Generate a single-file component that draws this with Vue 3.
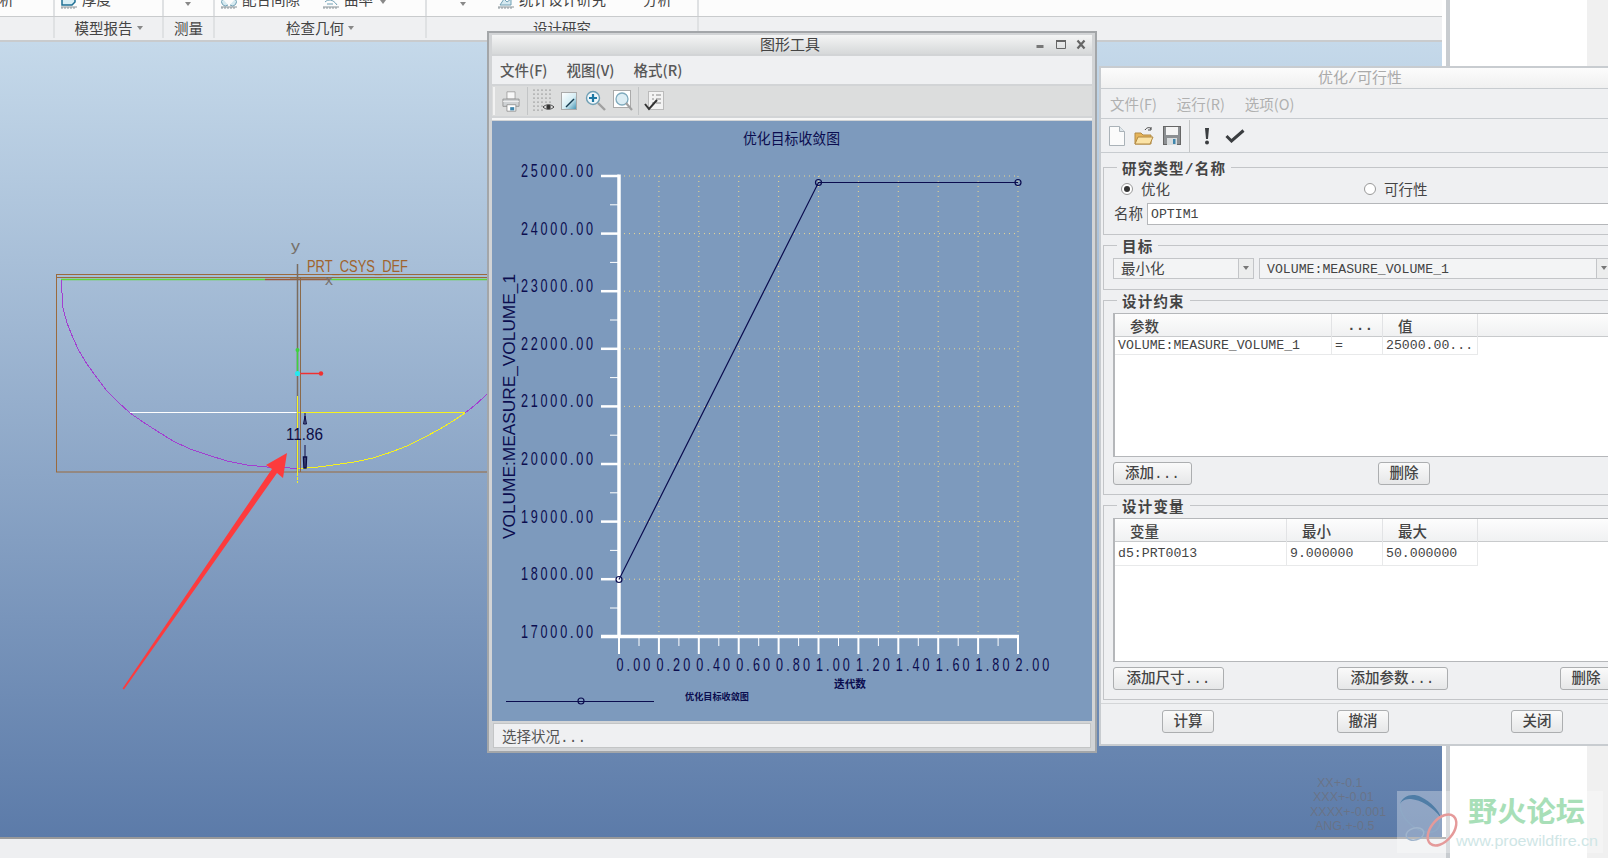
<template>
  <div class="desktop">
    <div class="workspace">
      <header class="ribbon">
        <div class="ribbon-row ribbon-top">
          <div class="cell"><span class="tool" style="margin-left:-15px">分析</span></div>
          <div class="cell">
            <svg class="rib-icon" style="margin-left:6px" width="16" height="10" viewBox="0 0 16 10"><path d="M1 0v6h10l3-3V0" fill="#d8eef5" stroke="#1d6f94" stroke-width="1.5"/><path d="M0 8h16M1 8v2M4 8v2M7 8v2M10 8v2M13 8v2" stroke="#8a9499" fill="none"/></svg>
            <span class="tool" style="margin-left:5px">厚度</span>
          </div>
          <div class="cell"><i class="caret" style="margin-left:21px"></i></div>
          <div class="cell">
            <svg class="rib-icon" style="margin-left:6px" width="16" height="10" viewBox="0 0 16 10"><path d="M2 0a3 3 0 0 0 5 6M14 0a3 3 0 0 1-5 6" fill="#d5e9f0" stroke="#6f9fb4"/><path d="M0 8h16M1 8v2M4 8v2M7 8v2M10 8v2M13 8v2" stroke="#8a9499" fill="none"/></svg>
            <span class="tool" style="margin-left:5px">配合间隙</span>
            <svg class="rib-icon" style="margin-left:23px" width="16" height="10" viewBox="0 0 16 10"><path d="M2 3c3-3 8-3 12 3M4 5h6" fill="none" stroke="#6f9fb4"/><path d="M0 8h16M1 8v2M4 8v2M7 8v2M10 8v2M13 8v2" stroke="#8a9499" fill="none"/></svg>
            <span class="tool" style="margin-left:5px">曲率</span>
            <i class="caret" style="margin-left:7px;margin-bottom:4px"></i>
          </div>
          <div class="cell">
            <i class="caret" style="margin-left:33px"></i>
            <svg class="rib-icon" style="margin-left:32px" width="16" height="10" viewBox="0 0 16 10"><path d="M2 6l4-6 3 3 4-3v6z" fill="#d5e9f0" stroke="#6f9fb4"/><path d="M0 8h16M1 8v2M4 8v2M7 8v2M10 8v2M13 8v2" stroke="#8a9499" fill="none"/></svg>
            <span class="tool" style="margin-left:5px">统计设计研究</span>
            <span class="tool" style="margin-left:37px">分析</span>
          </div>
          <div class="cell"></div>
        </div>
        <div class="ribbon-row ribbon-bottom">
          <div class="cell"></div>
          <div class="cell center"><span>模型报告</span><i class="caret"></i></div>
          <div class="cell center"><span>测量</span></div>
          <div class="cell center"><span>检查几何</span><i class="caret"></i></div>
          <div class="cell center"><span>设计研究</span></div>
          <div class="cell"></div>
        </div>
      </header>

      <div class="view-row">
        <div class="viewport">
          <svg class="cad" width="1442" height="795" viewBox="0 41 1442 795">
            <g fill="none" stroke="#9a6a3d" stroke-width="1">
              <rect x="56.5" y="273.5" width="600" height="197.5" />
              <path d="M57 276.5H660" />
            </g>
            <path d="M61 278.5H265M331 278.5H660" stroke="#5fd83a" stroke-width="1.5" fill="none" />
            <path d="M265 278.5H330" stroke="#9a5a3a" stroke-width="1.5" fill="none" />
            <polyline :points="purpleArc" fill="none" stroke="#a23fd0" stroke-width="1" shape-rendering="crispEdges" />
            <path d="M465 412C472 407 480 400 488 392" fill="none" stroke="#a23fd0" stroke-width="1" shape-rendering="crispEdges" />
            <path d="M130 411.5H297" stroke="#fff" stroke-width="1" />
            <path d="M297 411.5H465" stroke="#f6f21e" stroke-width="1" />
            <polyline :points="yellowArc" fill="none" stroke="#f6f21e" stroke-width="1" shape-rendering="crispEdges" />
            <g stroke="#8b6a4a" fill="none">
              <path d="M297.5 263V471" stroke="#7a6c60" stroke-width="1.5" />
              <path d="M300.5 276V471" />
              <path d="M290 278h40" />
            </g>
            <path d="M297.5 395V472" stroke="#f6f21e" stroke-width="1" />
            <path d="M297.5 472V482" stroke="#f6f21e" stroke-width="1" stroke-dasharray="3 1" />
            <path d="M297.5 349V372" stroke="#3ed43e" stroke-width="1.5" />
            <path d="M298 372.5H321" stroke="#f03030" stroke-width="1.5" />
            <circle cx="297.5" cy="349" r="2" fill="#3ed43e" />
            <circle cx="321" cy="372.5" r="2.2" fill="#f03030" />
            <circle cx="297.5" cy="372.5" r="2.6" fill="#26e8f0" />
            <text x="291" y="250" class="cad-axis" textLength="9" lengthAdjust="spacingAndGlyphs">y</text>
            <text x="325" y="284" class="cad-axis" textLength="8" lengthAdjust="spacingAndGlyphs">x</text>
            <text x="307" y="271" class="cad-name" textLength="101" lengthAdjust="spacingAndGlyphs">PRT_CSYS_DEF</text>
            <text x="286" y="439" class="cad-dim" textLength="37" lengthAdjust="spacingAndGlyphs">11.86</text>
            <g stroke="#0c0d45" fill="none">
              <path d="M305 412V423" />
              <path d="M303.5 423h3l-1.5-8z" />
              <path d="M305 444V467" />
              <path d="M303.5 456h3l-.5 11h-2z" stroke-width="1.5" />
            </g>
            <path d="M122.500 687.500L272 468L266 464L287 452L283 477L277 472L124 688.500Z" fill="#fd3b3d" />
            <g class="tolerance">
              <text x="1317" y="786">XX+-0.1</text>
              <text x="1313" y="800">XXX+-0.01</text>
              <text x="1310" y="815">XXXX+-0.001</text>
              <text x="1315" y="829">ANG.+-0.5</text>
            </g>
          </svg>
        </div>
        <div class="view-gap"></div>
      </div>
      <div class="statusbar"></div>
    </div>
    <div class="side-line"></div>
    <div class="side-white"></div>

    <!-- graph window -->
    <section class="win graph-win">
      <div class="win-title">
        <span>图形工具</span>
        <div class="win-controls">
          <svg width="60" height="14" viewBox="0 0 60 14">
            <rect x="4.500" y="7" width="7" height="3" fill="#777" />
            <path d="M24.500 2.500h9v8h-9z" fill="none" stroke="#666" /><path d="M24 3h10" stroke="#666" stroke-width="2" />
            <path d="M45.500 2.500l7 8M52.500 2.500l-7 8" stroke="#666" stroke-width="2.2" />
          </svg>
        </div>
      </div>
      <nav class="graph-menu">
        <span>文件(F)</span><span>视图(V)</span><span>格式(R)</span>
      </nav>
      <div class="graph-tools">
        <i class="grip"></i>
        <svg class="ti" style="margin-left:6px" width="20" height="21" viewBox="0 0 24 26">
          <path d="M7 1h10v9H7z" fill="#f8f8f8" stroke="#9a9a9a" />
          <path d="M2 10h20v9H2z" fill="#cfd2d4" stroke="#8c8c8c" />
          <path d="M2 13h20" stroke="#f2f2f2" />
          <path d="M7 17h11v8H7z" fill="#fff" stroke="#8c8c8c" />
          <path d="M11 20h5v4h-5z" fill="#3f86ad" />
        </svg>
        <i class="tsep" style="margin-left:6px"></i>
        <svg class="ti" style="margin-left:5px" width="22" height="24" viewBox="0 0 22 24">
          <g fill="#555"><circle v-for="d in gridDots" :key="d[0] + '-' + d[1]" :cx="d[0]" :cy="d[1]" r=".6" /></g>
          <path d="M10 18c3-3 8-3 11 0c-3 3-8 3-11 0z" fill="#ddd" stroke="#444" />
          <circle cx="15.500" cy="18" r="2.200" fill="#333" />
        </svg>
        <svg class="ti" style="margin-left:6px" width="16" height="18" viewBox="0 0 16 18">
          <defs><linearGradient id="bx" x1="0" y1="0" x2="1" y2="1"><stop offset="0" stop-color="#fff" /><stop offset=".55" stop-color="#d5edf4" /><stop offset="1" stop-color="#3d8fb0" /></linearGradient></defs>
          <rect x=".5" y=".5" width="15" height="17" fill="url(#bx)" stroke="#aaa" />
          <path d="M5 15L13 7" stroke="#163c50" stroke-width="1.400" />
        </svg>
        <svg class="ti" style="margin-left:8px" width="21" height="22" viewBox="0 0 21 22">
          <circle cx="8" cy="8" r="6.500" fill="#eef6fa" stroke="#6f9fb4" stroke-width="1.400" />
          <path d="M8 4v8M4 8h8" stroke="#1d78a4" stroke-width="2.200" />
          <path d="M13 13l7 7" stroke="#a0a0a0" stroke-width="2.400" />
        </svg>
        <svg class="ti" style="margin-left:7px" width="20" height="22" viewBox="0 0 20 22">
          <rect x=".5" y=".5" width="17" height="17" fill="#fff" stroke="#aaa" />
          <circle cx="9" cy="9" r="6" fill="#dcedf4" stroke="#7faabd" stroke-width="1.300" />
          <path d="M13 13l6 7" stroke="#a0a0a0" stroke-width="2.200" />
        </svg>
        <i class="tsep" style="margin-left:5px"></i>
        <svg class="ti" style="margin-left:5px" width="20" height="21" viewBox="0 0 20 21">
          <rect x="4.500" y=".5" width="15" height="18" fill="#f3f3f3" stroke="#bbb" />
          <path d="M8 4h2M12 4h5M8 8h2M12 8h5M8 12h2M12 12h5" stroke="#888" />
          <path d="M1 13l4 5L13 9" fill="none" stroke="#333" stroke-width="2" />
        </svg>
      </div>
      <div class="graph-strip"></div>
      <div class="plot">
        <svg width="600" height="600" viewBox="0 0 600 600">
          <g class="grid-dots">
            <path v-for="h in yTicks" :key="'h' + h.value" :d="`M127 ${h.y}H526`" />
            <path v-for="v in xTicks.slice(1)" :key="'v' + v.label" :d="`M${v.x} 55V515`" />
          </g>
          <text x="251" y="23" class="chart-title" textLength="97" lengthAdjust="spacingAndGlyphs">优化目标收敛图</text>
          <g class="axis">
            <path d="M127 53.500V517" stroke-width="3.500" />
            <path d="M109 515.500H527" stroke-width="3.500" />
            <path v-for="h in yTicks" :key="'mt' + h.value" :d="`M109 ${h.y}H127`" stroke-width="2.500" />
            <path v-for="h in yTicks.slice(0, -1)" :key="'ms' + h.value" :d="`M118 ${h.y + 28.8}H127`" stroke-width="1" />
            <path v-for="v in xTicks" :key="'xm' + v.label" :d="`M${v.x} 515V533`" stroke-width="2" />
            <path v-for="v in xTicks.slice(0, -1)" :key="'xs' + v.label" :d="`M${v.x + 20} 515V525`" stroke-width="1" />
          </g>
          <text v-for="h in yTicks" :key="'yl' + h.value" :transform="`translate(29 ${h.y + 1}) scale(.72 1)`" class="tick" textLength="100">{{ h.value }}.00</text>
          <text v-for="v in xTicks" :key="'xl' + v.label" :transform="`translate(${v.x - 2.5} 550) scale(.72 1)`" class="tick" textLength="47">{{ v.label }}</text>
          <text x="22.500" y="418" class="axis-title" transform="rotate(-90 22.500 418)" textLength="265" lengthAdjust="spacingAndGlyphs">VOLUME:MEASURE_VOLUME_1</text>
          <text x="342" y="567" class="x-title" textLength="32" lengthAdjust="spacingAndGlyphs">迭代数</text>
          <polyline points="127,458.500 326.500,61.500 526,61.500" fill="none" stroke="#0b0d4f" stroke-width="1.200" />
          <g fill="none" stroke="#0b0d4f" stroke-width="1.200">
            <circle cx="127" cy="458.500" r="3" />
            <circle cx="326.500" cy="61.500" r="3" />
            <circle cx="526" cy="61.500" r="3" />
            <circle cx="89" cy="580" r="3" />
            <path d="M14 580.500H162" />
          </g>
          <text x="193" y="579" class="legend-text" textLength="64" lengthAdjust="spacingAndGlyphs">优化目标收敛图</text>
        </svg>
      </div>
      <div class="graph-status"><span>选择状况...</span></div>
    </section>

    <!-- optimize dialog -->
    <section class="win opt-win">
      <div class="opt-title">优化/可行性</div>
      <nav class="opt-menu">
        <span>文件(F)</span><span>运行(R)</span><span>选项(O)</span>
      </nav>
      <div class="opt-tools">
        <svg width="16" height="20" viewBox="0 0 16 20" style="margin-left:8px">
          <path d="M.5.5h10l5 5v14H.5z" fill="#fbfbfb" stroke="#aab2b8" />
          <path d="M10.500.5v5h5" fill="#dfe7ec" stroke="#aab2b8" />
        </svg>
        <svg width="20" height="20" viewBox="0 0 20 20" style="margin-left:9px">
          <path d="M1 18V7h6l2 2h8v9z" fill="#e6b45a" stroke="#b28a44" />
          <path d="M1 18l3-7h15l-3 7z" fill="#fbe3a6" stroke="#b28a44" />
          <path d="M11 4c2-3 5-3 6-1M17 1v3h-3" fill="none" stroke="#444" />
        </svg>
        <svg width="18" height="19" viewBox="0 0 18 19" style="margin-left:9px">
          <rect x=".5" y=".5" width="17" height="18" fill="#8c8f92" stroke="#666" />
          <rect x="3" y="1" width="12" height="8" fill="#f4f4f4" />
          <rect x="4" y="12" width="10" height="7" fill="#d8dcde" />
          <rect x="10" y="13" width="2.500" height="5" fill="#3f86ad" />
        </svg>
        <i class="tsep dark" style="margin-left:8px"></i>
        <svg width="6" height="18" viewBox="0 0 6 18" style="margin-left:14px">
          <path d="M1 1h4l-1 11H2z" fill="#3a3d40" /><circle cx="3" cy="15.500" r="2" fill="#3a3d40" />
        </svg>
        <svg width="20" height="14" viewBox="0 0 20 14" style="margin-left:15px">
          <path d="M1.500 7l5 5L18.500 1.500" fill="none" stroke="#3a3d40" stroke-width="3" />
        </svg>
      </div>
      <div class="opt-body">
        <div class="group g-study">
          <span class="legend">研究类型/名称</span>
          <div class="radio-row">
            <label class="radio-item"><i class="radio on"></i>优化</label>
            <label class="radio-item"><i class="radio"></i>可行性</label>
          </div>
          <div class="name-row">
            <span class="name-label">名称</span>
            <div class="input mono">OPTIM1</div>
          </div>
        </div>
        <div class="group g-goal">
          <span class="legend">目标</span>
          <div class="select-row">
            <div class="select small"><span>最小化</span><i class="sel-btn"></i></div>
            <div class="select big mono"><span>VOLUME:MEASURE_VOLUME_1</span><i class="sel-btn"></i></div>
          </div>
        </div>
        <div class="group g-table">
          <span class="legend">设计约束</span>
          <div class="table">
            <div class="tr head cons">
              <div class="th first">参数</div>
              <div class="th dots">...</div>
              <div class="th val">值</div>
              <div class="th"></div>
            </div>
            <div class="tr cons row">
              <div class="td mono">VOLUME:MEASURE_VOLUME_1</div>
              <div class="td mono">=</div>
              <div class="td mono">25000.00...</div>
            </div>
          </div>
          <div class="btn-row">
            <button class="btn w79">添加...</button>
            <button class="btn w52" style="margin-left:186px">删除</button>
          </div>
        </div>
        <div class="group g-table">
          <span class="legend">设计变量</span>
          <div class="table">
            <div class="tr head vars">
              <div class="th first">变量</div>
              <div class="th val">最小</div>
              <div class="th val">最大</div>
              <div class="th"></div>
            </div>
            <div class="tr vars row tall">
              <div class="td mono">d5:PRT0013</div>
              <div class="td mono">9.000000</div>
              <div class="td mono">50.000000</div>
            </div>
          </div>
          <div class="btn-row">
            <button class="btn w111">添加尺寸...</button>
            <button class="btn w111" style="margin-left:113px">添加参数...</button>
            <button class="btn w52" style="margin-left:112px">删除</button>
          </div>
        </div>
      </div>
      <div class="opt-foot">
        <button class="btn w52">计算</button>
        <button class="btn w52" style="margin-left:123px">撤消</button>
        <button class="btn w52" style="margin-left:122px">关闭</button>
      </div>
    </section>

    <!-- forum watermark -->
    <svg class="watermark" width="206" height="62" viewBox="0 0 206 62">
      <rect width="206" height="62" fill="#fff" fill-opacity=".3" />
      <ellipse cx="23" cy="23" rx="23" ry="14" transform="rotate(40 23 23)" fill="none" stroke="#8fa9c6" stroke-width="1.500" />
      <path d="M3 13C6 4 16 2 24 6C34 11 42 19 44 27C36 16 24 9 14 8C9 8 5 9 3 13Z" fill="#4f7da6" />
      <ellipse cx="45" cy="39" rx="18" ry="11" transform="rotate(-50 45 39)" fill="none" stroke="#e59a9a" stroke-width="2.500" />
      <ellipse cx="18" cy="43" rx="9" ry="6" transform="rotate(-15 18 43)" fill="none" stroke="#9fb4cc" stroke-width="1.500" />
      <text x="71" y="31" class="wm-title" textLength="117" lengthAdjust="spacingAndGlyphs">野火论坛</text>
      <text x="59" y="55" class="wm-url" textLength="142" lengthAdjust="spacingAndGlyphs">www.proewildfire.cn</text>
    </svg>
  </div>
</template>

<script setup>
// chart scales, in plot coordinates
const yTicks = []
for (let i = 0; i <= 8; i++) {
  yTicks.push({ value: 25000 - i * 1000, y: +(55 + i * 57.6).toFixed(1) })
}

const xTicks = []
for (let i = 0; i <= 10; i++) {
  xTicks.push({ label: (i * 0.2).toFixed(2), x: +(127 + i * 39.9).toFixed(1) })
}

const gridDots = []
for (let r = 0; r < 6; r++) {
  for (let c = 0; c < 5; c++) {
    if (r < 4 || c < 3) gridDots.push([1 + c * 4, 1 + r * 4])
  }
}

// section curve of the part, read off the model view
const purpleArc = '61.5,279 62,292 63,307 67,322 73,337 79,350 87,363 97,377 107,390 118,401 130,412 143,421 157,430 173,440 190,448 208,454 227,460 247,464 267,466 297,467.3'
const yellowArc = '297,467.3 307,467 323,465.5 340,463 357,460.5 373,457 390,451.5 407,445 424,436.5 440,428 453,420 465,412'
</script>

<style>
html, body {
  margin: 0;
  overflow: hidden;
}
</style>

<style scoped>
.desktop {
  position: relative;
  display: flex;
  width: 1608px;
  height: 858px;
  overflow: hidden;
  background: #f0f0f0;
  font-family: "Noto Sans CJK SC", "Liberation Sans", sans-serif;
  color: #444;
}

.workspace {
  display: flex;
  flex-direction: column;
  width: 1446px;
  flex: none;
  background: #fff;
}

.side-line {
  width: 4px;
  flex: none;
  background: #c8ccd0;
}

.side-white {
  width: 137px;
  flex: none;
  background: #fff;
}

/* ribbon */
.ribbon {
  width: 1442px;
  flex: none;
  font-size: 14.5px;
}

.ribbon-row {
  display: grid;
  grid-template-columns: 55px 109px 51px 212px 272px 1fr;
}

.ribbon-top {
  height: 16px;
  background: #fcfcfc;
  border-bottom: 1px solid #c9cbcd;
  overflow: hidden;
}

.ribbon-bottom {
  height: 23px;
  background: #eff0f2;
  border-bottom: 2px solid #c9cbcd;
}

.cell {
  display: flex;
  align-items: flex-end;
  border-right: 2px solid #dfe1e3;
  min-width: 0;
}

.ribbon-top .cell {
  height: 16px;
  padding-bottom: 8px;
  box-sizing: border-box;
}

.ribbon-top .cell:last-child,
.ribbon-bottom .cell:last-child {
  border-right: none;
}

.ribbon-bottom .cell {
  align-items: center;
  justify-content: center;
  height: 21px;
  line-height: 21px;
}

.tool {
  flex: none;
  line-height: 18px;
  white-space: nowrap;
}

.rib-icon {
  flex: none;
  margin-bottom: -1px;
}

.caret {
  display: inline-block;
  flex: none;
  width: 0;
  height: 0;
  margin-left: 4px;
  margin-bottom: 2px;
  border-left: 3.5px solid transparent;
  border-right: 3.5px solid transparent;
  border-top: 4px solid #888;
}

.ribbon-bottom .caret {
  margin-bottom: 0;
}

/* model view */
.view-row {
  display: flex;
  height: 795px;
  flex: none;
}

.viewport {
  width: 1442px;
  flex: none;
  background: linear-gradient(#c5d9ea, #5c7ba9);
}

.view-gap {
  flex: 1;
}

.cad {
  display: block;
}

.cad-axis {
  font: 15px "Liberation Sans", sans-serif;
  fill: #77716c;
}

.cad-name {
  font: 16px "Liberation Sans", sans-serif;
  fill: #a0642d;
}

.cad-dim {
  font: 16px "Liberation Sans", sans-serif;
  fill: #0c0d45;
}

.tolerance text {
  font: 12.5px "Liberation Sans", sans-serif;
  fill: #6d6e78;
  fill-opacity: 0.7;
}

.statusbar {
  flex: 1;
  background: #eeeff1;
  border-top: 2px solid #999;
}

/* windows */
.win {
  position: absolute;
  box-sizing: border-box;
}

.graph-win {
  left: 487px;
  top: 31px;
  width: 610px;
  height: 722px;
  display: flex;
  flex-direction: column;
  padding: 2px 3px 2px 3px;
  gap: 2px;
  background: #d2d4d6;
  border: 2px solid #a3a6a9;
}

.win-title {
  position: relative;
  height: 19px;
  flex: none;
  background: linear-gradient(#f4f5f5, #d6d8d9);
  text-align: center;
  font-size: 15px;
  line-height: 17px;
  padding-right: 4px;
  color: #444;
}

.win-controls {
  position: absolute;
  right: 0;
  top: 3px;
  line-height: 0;
}

.graph-menu {
  display: flex;
  align-items: center;
  gap: 19px;
  height: 28px;
  box-sizing: border-box;
  flex: none;
  padding: 0 0 2px 8px;
  background: #eff0f2;
  font-size: 14.5px;
  font-weight: 500;
  color: #585858;
}

.graph-tools {
  display: flex;
  align-items: center;
  height: 30px;
  flex: none;
  background: #dcdddd;
}

.grip {
  width: 2px;
  height: 28px;
  margin-left: 1px;
  background: #f2f2f2;
}

.ti {
  flex: none;
}

.tsep {
  flex: none;
  width: 1px;
  height: 28px;
  background: #c3c5c6;
}

.tsep.dark {
  height: 32px;
}

.graph-strip {
  height: 2px;
  flex: none;
  margin: 0 0 -1px;
  background: #f6f6f6;
}

.plot {
  width: 600px;
  height: 600px;
  flex: none;
  background: #7d9abd;
}

.plot svg {
  display: block;
}

.grid-dots path {
  stroke: #ecd890;
  stroke-width: 1;
  stroke-dasharray: 1 4;
  fill: none;
}

.axis path {
  stroke: #fff;
  fill: none;
}

.tick {
  font: 17.5px "Liberation Sans", sans-serif;
  fill: #0b0d4f;
}

.axis-title {
  font: 17px "Liberation Sans", sans-serif;
  fill: #0b0d4f;
}

.chart-title {
  font: 400 15px "Noto Sans CJK SC", sans-serif;
  fill: #0b0d4f;
}

.x-title {
  font: 700 11px "Noto Sans CJK SC", sans-serif;
  fill: #0b0d4f;
}

.legend-text {
  font: 700 9px "Noto Sans CJK SC", sans-serif;
  fill: #0b0d4f;
}

.graph-status {
  display: flex;
  align-items: center;
  height: 25px;
  flex: none;
  box-sizing: border-box;
  margin: 0 1px;
  padding-left: 8px;
  background: #eff0f2;
  border: 1px solid #c3c5c6;
  font-family: "Liberation Mono", "Noto Sans CJK SC", monospace;
  font-size: 14.5px;
  color: #555;
}

/* optimize dialog */
.opt-win {
  left: 1099px;
  top: 66px;
  width: 530px;
  height: 680px;
  background: #eff0f2;
  border: 2px solid #c8ccd0;
}

.opt-title {
  height: 20px;
  background: linear-gradient(#fcfcfc, #f0f0f0);
  border-bottom: 1px solid #c8ccd0;
  padding-left: 217px;
  font-family: "Liberation Mono", "Noto Sans CJK SC", monospace;
  font-size: 15px;
  line-height: 23px;
  color: #aaa;
}

.opt-menu {
  display: flex;
  align-items: center;
  gap: 20px;
  height: 29px;
  padding-left: 9px;
  font-size: 14.5px;
  color: #b0b0b0;
  border-bottom: 1px solid #c8ccd0;
}

.opt-tools {
  display: flex;
  align-items: center;
  height: 33px;
  border-bottom: 1px solid #c8ccd0;
}

.opt-body {
  display: flex;
  flex-direction: column;
  gap: 10px;
  padding: 14px 0 0 2px;
}

.group {
  position: relative;
  border: 1px solid #c3c5c8;
  padding-left: 9px;
}

.legend {
  position: absolute;
  left: 13px;
  top: -8px;
  padding: 0 5px;
  background: #eff0f2;
  font-family: "Liberation Mono", "Noto Sans CJK SC", monospace;
  font-size: 14.5px;
  font-weight: 700;
  line-height: 20px;
  letter-spacing: 1.2px;
  color: #444;
}

.g-study {
  height: 68px;
  box-sizing: border-box;
}

.radio-row {
  display: flex;
  height: 18px;
  margin-top: 12px;
  padding-left: 8px;
  font-size: 14.5px;
  line-height: 16px;
}

.radio-item {
  display: flex;
  align-items: center;
  gap: 8px;
  width: 243px;
}

.radio {
  position: relative;
  width: 12px;
  height: 12px;
  flex: none;
  box-sizing: border-box;
  border: 1px solid #999;
  border-radius: 50%;
  background: #fff;
}

.radio.on::after {
  content: "";
  position: absolute;
  left: 2px;
  top: 2px;
  width: 6px;
  height: 6px;
  border-radius: 50%;
  background: #333;
}

.name-row {
  display: flex;
  align-items: center;
  gap: 4px;
  margin-top: 5px;
  padding-left: 1px;
  font-size: 14.5px;
}

.name-label {
  flex: none;
  margin-top: -3px;
  white-space: nowrap;
}

.mono {
  font-family: "Liberation Mono", monospace;
  font-size: 13.2px;
  white-space: nowrap;
}

.input {
  width: 480px;
  height: 22px;
  flex: none;
  box-sizing: border-box;
  padding-left: 3px;
  line-height: 22px;
  background: #fff;
  border: 1px solid #b5b7ba;
}

.g-goal {
  height: 45px;
  box-sizing: border-box;
}

.select-row {
  display: flex;
  gap: 5px;
  margin-top: 12px;
}

.select {
  display: flex;
  justify-content: space-between;
  align-items: center;
  height: 21px;
  flex: none;
  box-sizing: border-box;
  padding-left: 7px;
  background: #f3f4f5;
  border: 1px solid #c3c5c8;
}

.select.small {
  width: 141px;
  font-size: 14.5px;
  line-height: 17px;
}

.select.small span {
  margin-top: -2px;
}

.select.big {
  width: 358px;
}

.select.big span {
  margin-top: 2px;
}

.sel-btn {
  position: relative;
  width: 14px;
  height: 100%;
  flex: none;
  background: #eceded;
  border-left: 1px solid #c3c5c8;
}

.select.big .sel-btn {
  width: 19px;
}

.sel-btn::after {
  content: "";
  position: absolute;
  left: 4px;
  top: 7px;
  border-left: 3.5px solid transparent;
  border-right: 3.5px solid transparent;
  border-top: 4px solid #777;
}

.g-table {
  height: 195px;
  box-sizing: border-box;
}

.table {
  width: 510px;
  height: 144px;
  box-sizing: border-box;
  margin-top: 12px;
  background: #fff;
  border: 1px solid #b5b7ba;
  border-left-width: 2px;
  overflow: hidden;
}

.tr {
  display: grid;
}

.cons {
  grid-template-columns: 217px 51px 95px 1fr;
}

.vars {
  grid-template-columns: 172px 96px 95px 1fr;
}

.head {
  height: 22px;
  background: linear-gradient(#fdfdfd, #f0f1f2);
  border-bottom: 1px solid #c8cacc;
}

.th {
  border-right: 1px solid #e2e3e5;
  font-size: 14.5px;
  font-weight: 500;
  line-height: 24px;
  padding-left: 15px;
  white-space: nowrap;
}

.th.dots {
  font-family: "Liberation Mono", monospace;
  font-weight: 700;
}

.row {
  height: 17px;
  line-height: 17px;
  border-bottom: 1px solid #e8e9ea;
  width: 363px;
}

.row.tall {
  height: 23px;
  line-height: 23px;
}

.row.cons {
  grid-template-columns: 217px 51px 95px;
}

.row.vars {
  grid-template-columns: 172px 96px 95px;
}

.td {
  padding-left: 3px;
  border-right: 1px solid #e8e9ea;
  overflow: hidden;
}

.btn-row {
  display: flex;
  margin-top: 5px;
}

.btn {
  height: 23px;
  padding: 0;
  flex: none;
  background: linear-gradient(#fafafa, #e6e7e8);
  border: 1px solid #acaeb0;
  border-radius: 3px;
  font-family: "Liberation Mono", "Noto Sans CJK SC", monospace;
  font-size: 14.5px;
  font-weight: 500;
  line-height: 20px;
  color: #444;
}

.w52 {
  width: 52px;
}

.w79 {
  width: 79px;
}

.w111 {
  width: 111px;
}

.opt-foot {
  display: flex;
  height: 41px;
  box-sizing: border-box;
  margin-top: 3px;
  padding: 6px 0 0 61px;
  border-top: 1px solid #d4d6d8;
}

.watermark {
  position: absolute;
  left: 1397px;
  top: 791px;
}

.wm-title {
  font: 700 28px "Noto Sans CJK SC", sans-serif;
  fill: #a8dfb8;
}

.wm-url {
  font: 15px "Liberation Sans", sans-serif;
  fill: #cfe6e6;
}
</style>
